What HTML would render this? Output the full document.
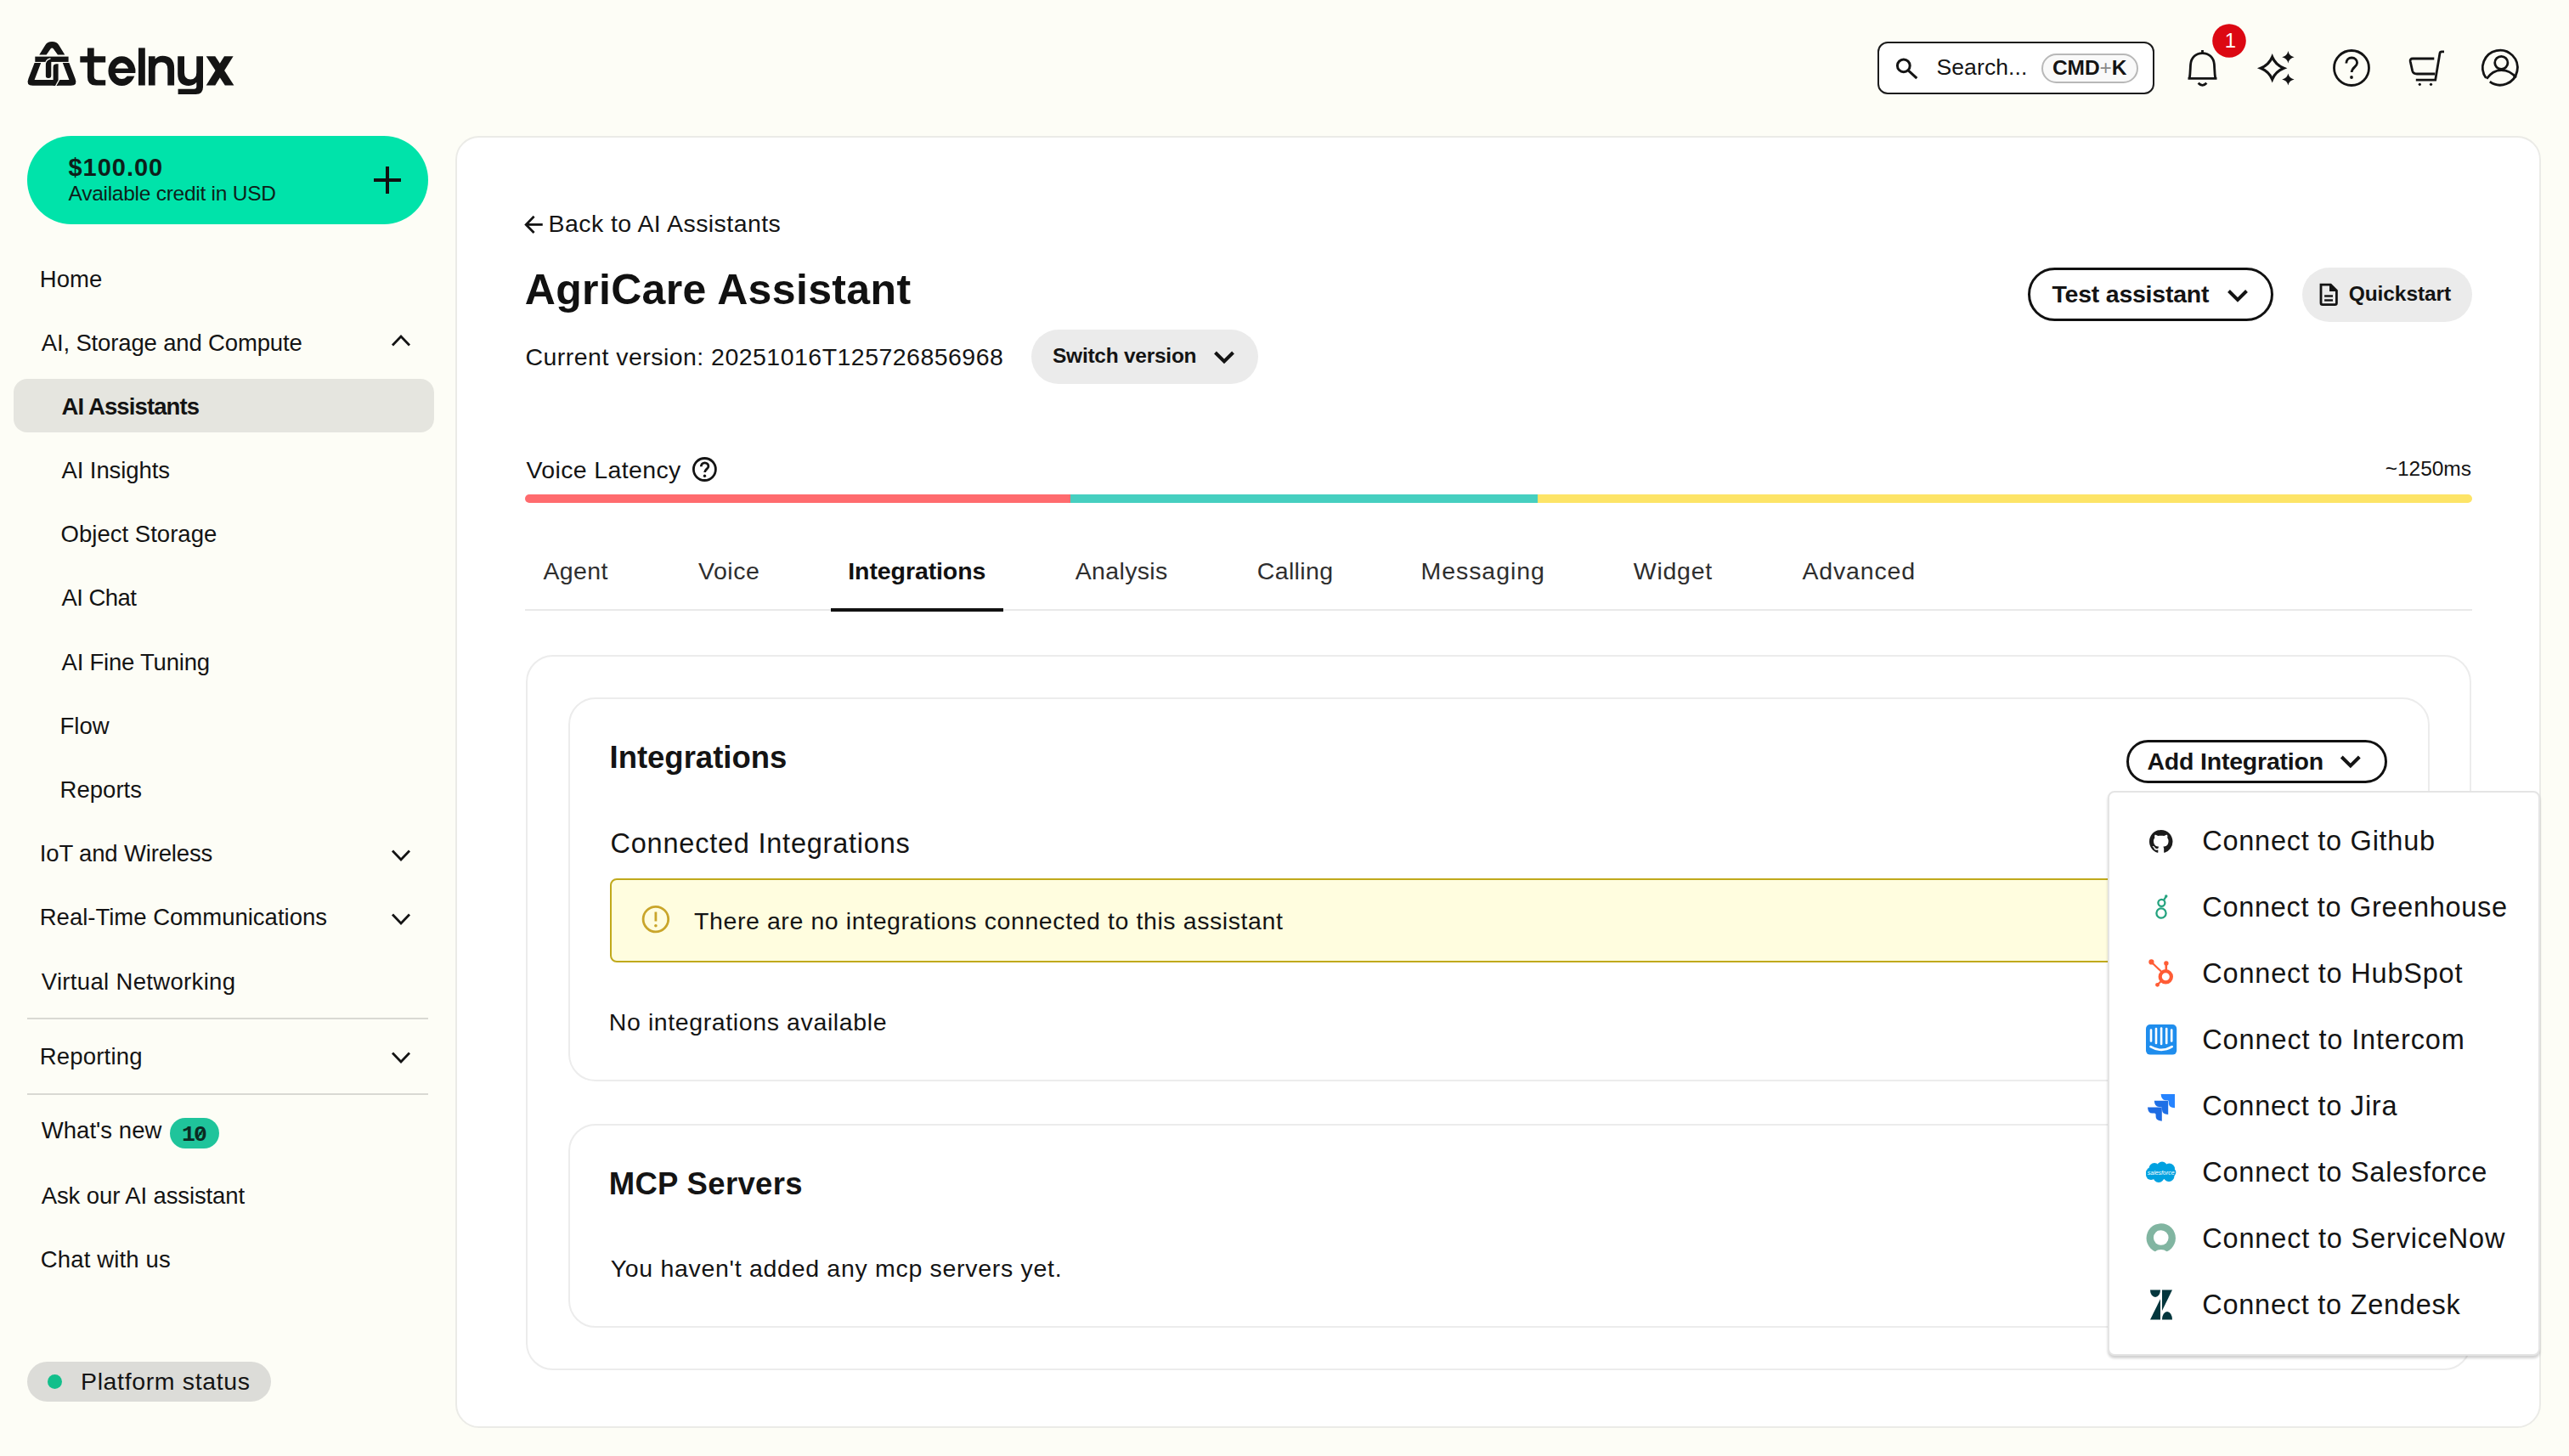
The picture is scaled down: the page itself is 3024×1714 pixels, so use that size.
<!DOCTYPE html>
<html><head><meta charset="utf-8"><style>
html,body{margin:0;padding:0;}
body{width:3024px;height:1714px;overflow:hidden;background:#fdfdf6;position:relative;font-family:"Liberation Sans", sans-serif;}
.t{position:absolute;white-space:pre;}
.a{position:absolute;box-sizing:border-box;}
svg{position:absolute;overflow:visible;}
@media (max-width:2000px){html{zoom:0.5;}}
</style></head><body>
<!-- main card -->
<div class="a" style="left:536px;top:160px;width:2455px;height:1521px;background:#fff;border:2px solid #ebebe7;border-radius:28px"></div>
<!-- logo icon -->
<svg style="left:32px;top:49px" width="58" height="52" viewBox="0 0 58 52">
 <g fill="#141414">
  <path d="M14.25,15.5 L21.2,4.2 C23,1.2 25.5,0 29.3,0 C33.1,0 35.6,1.2 37.4,4.2 L44.3,15.5 L36,15.5 L30.9,8.4 Q29.2,6.6 27.5,8.4 L22.6,15.5 Z"/>
  <rect x="9.3" y="17.6" width="39.3" height="6.3"/>
  <path d="M8.6,25 L16.2,25 L8.6,45.1 L36,45.1 L36,51.7 L6.5,51.7 Q-1.8,51.7 1.5,43.5 Z"/>
  <path d="M41.8,25 L49.4,25 L56.5,43.5 Q59.8,51.7 51.5,51.7 L33,51.7 L33,45.1 L49.4,45.1 Z"/>
  <path d="M21.7,23 L28.3,23 L28.3,39.7 Q28.3,43 25,43 Q21.7,43 21.7,39.7 Z"/>
  <path d="M30.5,30 Q30.5,26.2 34.3,26.2 L36.6,26.2 L36.6,51.7 L30.5,51.7 Z"/>
 </g>
 <g fill="none" stroke="#fdfdf6" stroke-width="1.3">
  <path d="M20.9,44 L20.9,29 Q20.9,21 27.5,19.8"/>
  <path d="M29.6,45 L29.6,30 Q29.6,25.3 34.3,25.3 L38,25.3"/>
  <path d="M33.6,52.2 L37.8,44.6"/>
 </g>
</svg>
<!-- telnyx wordmark -->
<svg style="left:0;top:0" width="1" height="1">
 <g fill="#141414">
  <path d="M102.9,56.4 H110.7 V66.2 H124.2 V73.5 H110.7 V89.5 Q110.7,94.2 115.4,94.2 H124.2 V100.5 H113 Q102.9,100.5 102.9,90.5 V73.5 H94.3 V66.2 H102.9 Z"/>
  <rect x="163" y="56.4" width="7.8" height="44.1"/>
  <path d="M174.9,100.5 V66.2 H182.6 V69.6 Q185.6,65.8 191.5,65.8 Q205.1,65.8 205.1,80.5 V100.5 H197.3 V81.5 Q197.3,73.3 190,73.3 Q182.6,73.3 182.6,81.5 V100.5 Z"/>
  <path d="M209.2,66.2 H217 V85.5 Q217,93.4 224.2,93.4 Q231.3,93.4 231.3,85.5 V66.2 H239 V102.5 Q239,111.1 230.4,111.1 H209.6 V104.7 H228.5 Q231.3,104.7 231.3,101.8 V96.8 Q228.2,100.9 222.3,100.9 Q209.2,100.9 209.2,87 Z"/>
  <path d="M242.7,66.2 H253.3 L275.4,100.5 H264.8 Z"/>
  <path d="M274.6,66.2 H264 L242.7,100.5 H253.3 Z"/>
 </g>
 <ellipse cx="143.35" cy="83.55" rx="12" ry="13.45" fill="none" stroke="#141414" stroke-width="7.8"/>
 <rect x="131" y="80.6" width="28.3" height="5.4" fill="#141414"/>
 <rect x="149" y="86" width="12.5" height="3.6" fill="#fdfdf6"/>
</svg>
<!-- credit pill -->
<div class="a" style="left:32px;top:160px;width:472px;height:104px;background:#00e3aa;border-radius:52px"></div>
<div class="a" style="left:440px;top:210.25px;width:32px;height:3.5px;background:#111"></div>
<div class="a" style="left:454.25px;top:196px;width:3.5px;height:32px;background:#111"></div>
<!-- sidebar highlight -->
<div class="a" style="left:16px;top:446px;width:495px;height:63px;background:#e5e5df;border-radius:16px"></div>
<svg style="left:0;top:0" width="1" height="1">
 <g fill="none" stroke="#141414" stroke-width="2.8">
  <polyline points="462,406.5 472,396 482,406.5"/>
  <polyline points="462,1001.5 472,1012 482,1001.5"/>
  <polyline points="462,1076.5 472,1087 482,1076.5"/>
  <polyline points="462,1239.5 472,1250 482,1239.5"/>
 </g>
</svg>
<div class="a" style="left:32px;top:1198px;width:472px;height:2px;background:#d9d9d3"></div>
<div class="a" style="left:32px;top:1287px;width:472px;height:2px;background:#d9d9d3"></div>
<div class="a" style="left:200px;top:1316px;width:57.5px;height:36px;background:#1fc49b;border-radius:18px"></div>
<svg style="left:0;top:0" width="1" height="1"><path d="M232.2,1339.5 L239.8,1328.5" stroke="#0b2a22" stroke-width="2"/></svg>
<div class="a" style="left:32px;top:1602.5px;width:287px;height:47px;background:#dcdcd8;border-radius:23.5px"></div>
<div class="a" style="left:55.5px;top:1618px;width:17px;height:17px;background:#12bf8b;border-radius:50%"></div>
<!-- search -->
<div class="a" style="left:2209.5px;top:48.75px;width:326px;height:62.5px;background:#fff;border:2px solid #1c1c1c;border-radius:12px"></div>
<div class="a" style="left:2402.5px;top:62.5px;width:114.5px;height:35px;background:#f9f9f9;border:2px solid #b8b8b8;border-radius:17.5px"></div>
<svg style="left:0;top:0" width="1" height="1">
 <g fill="none" stroke="#141414" stroke-width="3">
  <circle cx="2240.8" cy="77.3" r="7.4"/>
  <line x1="2246.2" y1="82.8" x2="2256.3" y2="92.2"/>
 </g>
 <!-- bell -->
 <g fill="none" stroke="#141414" stroke-width="2.8">
  <path d="M2575.5,92.3 H2609.5"/>
  <path d="M2577.3,92.3 C2578.3,86 2578.2,80 2578.6,75.5 C2579.4,67.5 2585,62.6 2592.5,62.6 C2600,62.6 2605.6,67.5 2606.4,75.5 C2606.8,80 2606.7,86 2607.7,92.3"/>
  <path d="M2592.5,59 V62.6"/>
  <path d="M2587.6,97.8 Q2592.5,103 2597.4,97.8"/>
 </g>
 <circle cx="2624" cy="48" r="19.8" fill="#dc0812"/>
 <!-- sparkle -->
 <path d="M2674.7,67.2 Q2678.6,76.4 2688.2,80.3 Q2678.6,84.2 2674.7,93.4 Q2670.8,84.2 2661.2,80.3 Q2670.8,76.4 2674.7,67.2 Z" fill="none" stroke="#141414" stroke-width="3.2" stroke-linejoin="miter"/>
 <path d="M2693.4,60 Q2694.6,66 2700.6,67.2 Q2694.6,68.4 2693.4,74.4 Q2692.2,68.4 2686.2,67.2 Q2692.2,66 2693.4,60 Z" fill="#141414"/>
 <path d="M2693.4,86.6 Q2694.6,92.4 2700.6,93.6 Q2694.6,94.8 2693.4,100.6 Q2692.2,94.8 2686.2,93.6 Q2692.2,92.4 2693.4,86.6 Z" fill="#141414"/>
 <!-- help -->
 <g fill="none" stroke="#141414" stroke-width="2.8">
  <circle cx="2768" cy="80" r="20.5"/>
  <path d="M2761.8,74.6 C2761.8,70.6 2764.6,68 2768.2,68 C2771.9,68 2774.6,70.7 2774.6,74.1 C2774.6,78.4 2768.2,79.6 2768.2,85"/>
 </g>
 <circle cx="2768" cy="91" r="1.9" fill="#141414"/>
 <!-- cart -->
 <g fill="none" stroke="#141414" stroke-width="2.8">
  <path d="M2877,60.8 H2874 Q2872.3,60.8 2872,62.5 L2866.7,94.2 H2843.8"/>
  <path d="M2865.3,69 H2840 Q2836.6,69 2837.2,72.2 L2839.7,83.5 Q2840.6,87 2845,87 H2866.3"/>
 </g>
 <circle cx="2848.3" cy="99.3" r="1.6" fill="#141414"/>
 <circle cx="2861.5" cy="99.3" r="1.6" fill="#141414"/>
 <!-- user -->
 <g fill="none" stroke="#141414" stroke-width="2.8">
  <path d="M2930.8,96.2 A20.5,20.5 0 1 0 2926.3,91.7"/>
  <circle cx="2944.3" cy="73.9" r="7.6"/>
  <path d="M2927,92.8 Q2934,82.6 2944.3,82.6 Q2955,82.6 2961.6,91.6"/>
 </g>
 <!-- back arrow -->
 <g fill="none" stroke="#141414" stroke-width="2.8">
  <path d="M619.5,264.4 H638.75"/>
  <path d="M628.6,254.8 L619.2,264.4 L628.6,274"/>
 </g>
</svg>
<!-- switch version -->
<div class="a" style="left:1214px;top:388px;width:267px;height:64px;background:#ebebeb;border-radius:32px"></div>
<!-- test assistant -->
<div class="a" style="left:2387px;top:315px;width:289px;height:63px;background:#fff;border:3px solid #111;border-radius:32px"></div>
<div class="a" style="left:2709.5px;top:315px;width:200px;height:63.75px;background:#ebebeb;border-radius:32px"></div>
<svg style="left:0;top:0" width="1" height="1">
 <g fill="none" stroke="#141414" stroke-width="4">
  <polyline points="1430.5,415 1441,425.5 1451.5,415"/>
  <polyline points="2623.5,342.5 2634,353 2644.5,342.5"/>
  <polyline points="2756.3,891 2766.8,901.5 2777.3,891"/>
 </g>
 <!-- doc -->
 <path d="M2732,335.2 H2743.4 L2750.4,342.2 V356.8 Q2750.4,358.6 2748.6,358.6 H2733.8 Q2732,358.6 2732,356.8 Z" fill="none" stroke="#141414" stroke-width="2.8"/>
 <path d="M2742,334.5 L2751,343 H2742 Z" fill="#141414"/>
 <rect x="2736.1" y="347.3" width="9.9" height="2.4" fill="#141414"/>
 <rect x="2736.1" y="352.3" width="9.9" height="2.4" fill="#141414"/>
 <!-- latency help -->
 <g fill="none" stroke="#141414" stroke-width="2.8">
  <circle cx="829.4" cy="552.5" r="13"/>
  <path d="M825.3,549.3 C825.3,546.6 827.2,544.8 829.6,544.8 C832.1,544.8 833.9,546.6 833.9,548.9 C833.9,551.8 829.6,552.5 829.6,556"/>
 </g>
 <circle cx="829.5" cy="560.2" r="1.7" fill="#141414"/>
</svg>
<!-- latency bar -->
<div class="a" style="left:618px;top:582px;width:642px;height:10px;background:#ff6b6e;border-radius:5px 0 0 5px"></div>
<div class="a" style="left:1260px;top:582px;width:550px;height:10px;background:#46cfc0"></div>
<div class="a" style="left:1810px;top:582px;width:1100px;height:10px;background:#fde467;border-radius:0 5px 5px 0"></div>
<!-- tabs -->
<div class="a" style="left:618px;top:717px;width:2292px;height:2px;background:#e9e9e9"></div>
<div class="a" style="left:978px;top:715.5px;width:203px;height:4px;background:#111"></div>
<!-- cards -->
<div class="a" style="left:618.75px;top:770.5px;width:2290px;height:842px;border:2px solid #ececec;border-radius:32px"></div>
<div class="a" style="left:668.75px;top:820.5px;width:2191px;height:452px;border:2px solid #ececec;border-radius:32px"></div>
<div class="a" style="left:668.75px;top:1322.5px;width:2191px;height:240px;border:2px solid #ececec;border-radius:32px"></div>
<div class="a" style="left:2503px;top:870.5px;width:306.5px;height:51.25px;border:3px solid #111;border-radius:26px"></div>
<!-- alert -->
<div class="a" style="left:718.25px;top:1034.25px;width:2091px;height:99px;background:#fffddf;border:2px solid #c0a91c;border-radius:8px"></div>
<svg style="left:0;top:0" width="1" height="1">
 <g fill="none" stroke="#c9a52a" stroke-width="2.8">
  <circle cx="771.9" cy="1082.1" r="14.8"/>
  <path d="M771.9,1073.5 V1084.5"/>
 </g>
 <circle cx="771.9" cy="1089.8" r="1.8" fill="#c9a52a"/>
</svg>
<!-- dropdown -->
<div class="a" style="left:2480.75px;top:931.25px;width:509.25px;height:665px;background:#fff;border:2px solid #e4e4e4;border-radius:8px;box-shadow:0 3px 3px rgba(0,0,0,0.18)"></div>
<svg style="left:2530.4px;top:976.6px" width="27.5" height="27.5" viewBox="0 0 16 16"><path fill="#1b1b1b" d="M8 0C3.58 0 0 3.58 0 8c0 3.54 2.29 6.53 5.47 7.59.4.07.55-.17.55-.38 0-.19-.01-.82-.01-1.49-2.01.37-2.53-.49-2.69-.94-.09-.23-.48-.94-.82-1.130-.28-.15-.68-.52-.01-.53.63-.01 1.08.58 1.23.82.72 1.21 1.87.87 2.33.66.07-.52.28-.87.51-1.07-1.780-.2-3.64-.89-3.64-3.95 0-.87.31-1.59.82-2.15-.08-.2-.36-1.02.08-2.12 0 0 .67-.21 2.2.82.64-.18 1.32-.27 2-.27.68 0 1.36.09 2 .27 1.53-1.04 2.2-.82 2.2-.82.44 1.1.16 1.92.08 2.12.51.56.82 1.27.82 2.15 0 3.07-1.87 3.75-3.65 3.95.29.25.54.73.54 1.48 0 1.07-.01 1.93-.01 2.2 0 .21.15.46.55.38A8.013 8.013 0 0016 8c0-4.42-3.58-8-8-8z"/></svg>
<svg style="left:0;top:0" width="1" height="1">
 <!-- greenhouse -->
 <g fill="none" stroke="#24a37f" stroke-width="2.3">
  <circle cx="2544.4" cy="1062.8" r="4"/>
  <circle cx="2544" cy="1075" r="5.6"/>
  <path d="M2547.2,1059.4 L2549.6,1055.5"/>
 </g>
 <circle cx="2549.8" cy="1055" r="1.7" fill="#24a37f"/>
 <!-- hubspot -->
 <g fill="none" stroke="#ff5c35">
  <circle cx="2549.3" cy="1149.8" r="6.6" stroke-width="4.2"/>
  <path d="M2532.6,1132.8 L2545,1144.5" stroke-width="2.2"/>
  <path d="M2549.8,1134 V1143" stroke-width="2.6"/>
  <path d="M2539.8,1159 L2545,1154" stroke-width="2.2"/>
 </g>
 <circle cx="2532.4" cy="1132.4" r="3.1" fill="#ff5c35"/>
 <circle cx="2549.9" cy="1134" r="2.7" fill="#ff5c35"/>
 <circle cx="2539.5" cy="1159.3" r="2.4" fill="#ff5c35"/>
 <!-- intercom -->
 <rect x="2526" y="1206" width="36.2" height="35.6" rx="5" fill="#1f8ded"/>
 <g stroke="#fff" stroke-width="2.6" stroke-linecap="round" fill="none">
  <path d="M2532,1212.5 V1225.5"/><path d="M2538,1211 V1228"/><path d="M2544.1,1210.5 V1229"/><path d="M2550.2,1211 V1228"/><path d="M2556.2,1212.5 V1225.5"/>
  <path d="M2531.5,1232.2 Q2544.1,1239.5 2556.7,1232.2"/>
 </g>
 <!-- jira -->
<path fill="#2684ff" d="M2543.6,1288 H2560 V1304.2 Q2552.8,1303.7 2552.8,1298.7 V1296.7 Q2552.8,1295.2 2551.3,1295.2 H2549.1 Q2544.1,1295.2 2543.6,1288 Z"/>
<path fill="#1d6fe6" d="M2535.8,1295.8 H2552.2 V1311.9 Q2545.0,1311.4 2545.0,1306.4 V1304.5 Q2545.0,1303.0 2543.5,1303.0 H2541.3 Q2536.3,1303.0 2535.8,1295.8 Z"/>
<path fill="#1e6ce3" d="M2528,1303.4 H2544.8 V1319.7 Q2537.6,1319.2 2537.6,1314.2 V1312.1 Q2537.6,1310.6 2536.1,1310.6 H2533.5 Q2528.5,1310.6 2528,1303.4 Z"/>
<!-- salesforce -->
 <g fill="#00a1e0">
  <ellipse cx="2543.7" cy="1380" rx="17.7" ry="8.5"/>
  <circle cx="2536" cy="1375.5" r="6.5"/><circle cx="2545" cy="1373.5" r="6"/><circle cx="2553.5" cy="1376" r="6.5"/>
  <circle cx="2532" cy="1383" r="6"/><circle cx="2541" cy="1385.5" r="6.5"/><circle cx="2553" cy="1384.5" r="6.5"/>
 </g>
 <text x="2543.7" y="1382.5" font-size="7" fill="#fff" text-anchor="middle" font-family="Liberation Sans" font-style="italic">salesforce</text>
 <!-- servicenow -->
 <circle cx="2543.75" cy="1457.5" r="17.2" fill="#81b5a1"/>
 <circle cx="2543.75" cy="1457" r="8.8" fill="#fff"/>
 <ellipse cx="2543.75" cy="1478.5" rx="9.5" ry="7.5" fill="#fff"/>
 <!-- zendesk -->
 <g fill="#03363d">
  <path d="M2531,1518.5 H2543 A6,8.5 0 0 1 2531,1518.5 Z"/>
  <path d="M2545,1518.5 H2557 L2545,1543 Z"/>
  <path d="M2543,1529.3 V1553.5 H2531 Z"/>
  <path d="M2545,1553.5 A6,9.5 0 0 1 2557,1553.5 Z"/>
 </g>
</svg>

<div class="t" style="left:80.50px;top:183.45px;font-size:29px;line-height:29px;font-weight:700;color:#0d1f1a;letter-spacing:0.967px;font-family:'Liberation Sans', sans-serif;">$100.00</div>
<div class="t" style="left:80.50px;top:216.26px;font-size:24.5px;line-height:24.5px;font-weight:400;color:#0d1f1a;letter-spacing:-0.258px;font-family:'Liberation Sans', sans-serif;">Available credit in USD</div>
<div class="t" style="left:46.75px;top:314.72px;font-size:27.5px;line-height:27.5px;font-weight:400;color:#141414;letter-spacing:0.063px;font-family:'Liberation Sans', sans-serif;">Home</div>
<div class="t" style="left:48.75px;top:390.47px;font-size:27.5px;line-height:27.5px;font-weight:400;color:#141414;letter-spacing:-0.149px;font-family:'Liberation Sans', sans-serif;">AI, Storage and Compute</div>
<div class="t" style="left:72.50px;top:464.72px;font-size:27.5px;line-height:27.5px;font-weight:700;color:#141414;letter-spacing:-0.890px;font-family:'Liberation Sans', sans-serif;">AI Assistants</div>
<div class="t" style="left:72.50px;top:539.97px;font-size:27.5px;line-height:27.5px;font-weight:400;color:#141414;letter-spacing:-0.090px;font-family:'Liberation Sans', sans-serif;">AI Insights</div>
<div class="t" style="left:71.50px;top:615.47px;font-size:27.5px;line-height:27.5px;font-weight:400;color:#141414;letter-spacing:0.028px;font-family:'Liberation Sans', sans-serif;">Object Storage</div>
<div class="t" style="left:72.50px;top:690.22px;font-size:27.5px;line-height:27.5px;font-weight:400;color:#141414;letter-spacing:-0.554px;font-family:'Liberation Sans', sans-serif;">AI Chat</div>
<div class="t" style="left:72.50px;top:765.72px;font-size:27.5px;line-height:27.5px;font-weight:400;color:#141414;letter-spacing:-0.214px;font-family:'Liberation Sans', sans-serif;">AI Fine Tuning</div>
<div class="t" style="left:70.50px;top:840.72px;font-size:27.5px;line-height:27.5px;font-weight:400;color:#141414;letter-spacing:0.016px;font-family:'Liberation Sans', sans-serif;">Flow</div>
<div class="t" style="left:70.50px;top:915.72px;font-size:27.5px;line-height:27.5px;font-weight:400;color:#141414;letter-spacing:0.035px;font-family:'Liberation Sans', sans-serif;">Reports</div>
<div class="t" style="left:46.75px;top:990.72px;font-size:27.5px;line-height:27.5px;font-weight:400;color:#141414;letter-spacing:-0.154px;font-family:'Liberation Sans', sans-serif;">IoT and Wireless</div>
<div class="t" style="left:46.75px;top:1065.97px;font-size:27.5px;line-height:27.5px;font-weight:400;color:#141414;letter-spacing:0.000px;font-family:'Liberation Sans', sans-serif;">Real-Time Communications</div>
<div class="t" style="left:48.75px;top:1142.22px;font-size:27.5px;line-height:27.5px;font-weight:400;color:#141414;letter-spacing:0.332px;font-family:'Liberation Sans', sans-serif;">Virtual Networking</div>
<div class="t" style="left:46.75px;top:1229.72px;font-size:27.5px;line-height:27.5px;font-weight:400;color:#141414;letter-spacing:0.194px;font-family:'Liberation Sans', sans-serif;">Reporting</div>
<div class="t" style="left:48.75px;top:1317.22px;font-size:27.5px;line-height:27.5px;font-weight:400;color:#141414;letter-spacing:0.037px;font-family:'Liberation Sans', sans-serif;">What's new</div>
<div class="t" style="left:48.75px;top:1394.22px;font-size:27.5px;line-height:27.5px;font-weight:400;color:#141414;letter-spacing:-0.112px;font-family:'Liberation Sans', sans-serif;">Ask our AI assistant</div>
<div class="t" style="left:47.75px;top:1469.22px;font-size:27.5px;line-height:27.5px;font-weight:400;color:#141414;letter-spacing:0.153px;font-family:'Liberation Sans', sans-serif;">Chat with us</div>
<div class="t" style="left:214.00px;top:1322.50px;font-size:26.5px;line-height:26.5px;font-weight:700;color:#0b2a22;letter-spacing:-1.903px;font-family:'Liberation Mono', monospace;">10</div>
<div class="t" style="left:95.00px;top:1612.12px;font-size:28.5px;line-height:28.5px;font-weight:400;color:#141414;letter-spacing:0.638px;font-family:'Liberation Sans', sans-serif;">Platform status</div>
<div class="t" style="left:2279.50px;top:66.31px;font-size:26.5px;line-height:26.5px;font-weight:400;color:#141414;letter-spacing:0.101px;font-family:'Liberation Sans', sans-serif;">Search...</div>
<div class="t" style="left:2416.00px;top:68.01px;font-size:24.5px;line-height:24.5px;font-weight:700;color:#141414;letter-spacing:-0.088px;font-family:'Liberation Sans', sans-serif;">CMD<span style="font-weight:400;color:#8a8a8a">+</span>K</div>
<div class="t" style="left:2618.70px;top:35.68px;font-size:24px;line-height:24px;font-weight:400;color:#ffffff;letter-spacing:0.000px;font-family:'Liberation Sans', sans-serif;">1</div>
<div class="t" style="left:645.50px;top:248.87px;font-size:28.5px;line-height:28.5px;font-weight:400;color:#141414;letter-spacing:0.441px;font-family:'Liberation Sans', sans-serif;">Back to AI Assistants</div>
<div class="t" style="left:617.75px;top:316.42px;font-size:50px;line-height:50px;font-weight:700;color:#111111;letter-spacing:0.353px;font-family:'Liberation Sans', sans-serif;">AgriCare Assistant</div>
<div class="t" style="left:618.50px;top:405.87px;font-size:28.5px;line-height:28.5px;font-weight:400;color:#141414;letter-spacing:0.467px;font-family:'Liberation Sans', sans-serif;">Current version: 20251016T125726856968</div>
<div class="t" style="left:1239.00px;top:407.26px;font-size:24.5px;line-height:24.5px;font-weight:700;color:#141414;letter-spacing:-0.257px;font-family:'Liberation Sans', sans-serif;">Switch version</div>
<div class="t" style="left:2415.50px;top:331.87px;font-size:28.5px;line-height:28.5px;font-weight:700;color:#141414;letter-spacing:-0.229px;font-family:'Liberation Sans', sans-serif;">Test assistant</div>
<div class="t" style="left:2764.75px;top:334.26px;font-size:24.5px;line-height:24.5px;font-weight:700;color:#141414;letter-spacing:-0.086px;font-family:'Liberation Sans', sans-serif;">Quickstart</div>
<div class="t" style="left:619.50px;top:539.12px;font-size:28.5px;line-height:28.5px;font-weight:400;color:#141414;letter-spacing:0.358px;font-family:'Liberation Sans', sans-serif;">Voice Latency</div>
<div class="t" style="left:2807.70px;top:539.66px;font-size:24.5px;line-height:24.5px;font-weight:400;color:#141414;letter-spacing:-0.037px;font-family:'Liberation Sans', sans-serif;">~1250ms</div>
<div class="t" style="left:639.50px;top:658.37px;font-size:28.5px;line-height:28.5px;font-weight:400;color:#2e2e2e;letter-spacing:0.360px;font-family:'Liberation Sans', sans-serif;">Agent</div>
<div class="t" style="left:822.00px;top:658.37px;font-size:28.5px;line-height:28.5px;font-weight:400;color:#2e2e2e;letter-spacing:0.533px;font-family:'Liberation Sans', sans-serif;">Voice</div>
<div class="t" style="left:998.25px;top:658.37px;font-size:28.5px;line-height:28.5px;font-weight:700;color:#111111;letter-spacing:-0.090px;font-family:'Liberation Sans', sans-serif;">Integrations</div>
<div class="t" style="left:1265.75px;top:658.37px;font-size:28.5px;line-height:28.5px;font-weight:400;color:#2e2e2e;letter-spacing:0.339px;font-family:'Liberation Sans', sans-serif;">Analysis</div>
<div class="t" style="left:1479.75px;top:658.37px;font-size:28.5px;line-height:28.5px;font-weight:400;color:#2e2e2e;letter-spacing:0.370px;font-family:'Liberation Sans', sans-serif;">Calling</div>
<div class="t" style="left:1672.50px;top:658.37px;font-size:28.5px;line-height:28.5px;font-weight:400;color:#2e2e2e;letter-spacing:0.941px;font-family:'Liberation Sans', sans-serif;">Messaging</div>
<div class="t" style="left:1922.75px;top:658.37px;font-size:28.5px;line-height:28.5px;font-weight:400;color:#2e2e2e;letter-spacing:0.744px;font-family:'Liberation Sans', sans-serif;">Widget</div>
<div class="t" style="left:2121.50px;top:658.37px;font-size:28.5px;line-height:28.5px;font-weight:400;color:#2e2e2e;letter-spacing:0.834px;font-family:'Liberation Sans', sans-serif;">Advanced</div>
<div class="t" style="left:717.50px;top:873.60px;font-size:36.5px;line-height:36.5px;font-weight:700;color:#141414;letter-spacing:-0.007px;font-family:'Liberation Sans', sans-serif;">Integrations</div>
<div class="t" style="left:2527.50px;top:882.12px;font-size:28.5px;line-height:28.5px;font-weight:700;color:#141414;letter-spacing:-0.207px;font-family:'Liberation Sans', sans-serif;">Add Integration</div>
<div class="t" style="left:718.50px;top:977.48px;font-size:32.5px;line-height:32.5px;font-weight:400;color:#141414;letter-spacing:0.771px;font-family:'Liberation Sans', sans-serif;">Connected Integrations</div>
<div class="t" style="left:817.00px;top:1070.12px;font-size:28.5px;line-height:28.5px;font-weight:400;color:#141414;letter-spacing:0.590px;font-family:'Liberation Sans', sans-serif;">There are no integrations connected to this assistant</div>
<div class="t" style="left:716.70px;top:1189.37px;font-size:28.5px;line-height:28.5px;font-weight:400;color:#141414;letter-spacing:0.614px;font-family:'Liberation Sans', sans-serif;">No integrations available</div>
<div class="t" style="left:716.65px;top:1375.90px;font-size:36.5px;line-height:36.5px;font-weight:700;color:#141414;letter-spacing:0.340px;font-family:'Liberation Sans', sans-serif;">MCP Servers</div>
<div class="t" style="left:718.65px;top:1478.87px;font-size:28.5px;line-height:28.5px;font-weight:400;color:#141414;letter-spacing:0.700px;font-family:'Liberation Sans', sans-serif;">You haven't added any mcp servers yet.</div>
<div class="t" style="left:2592.25px;top:973.73px;font-size:32.5px;line-height:32.5px;font-weight:400;color:#141414;letter-spacing:0.741px;font-family:'Liberation Sans', sans-serif;">Connect to Github</div>
<div class="t" style="left:2592.25px;top:1051.73px;font-size:32.5px;line-height:32.5px;font-weight:400;color:#141414;letter-spacing:0.687px;font-family:'Liberation Sans', sans-serif;">Connect to Greenhouse</div>
<div class="t" style="left:2592.25px;top:1129.73px;font-size:32.5px;line-height:32.5px;font-weight:400;color:#141414;letter-spacing:0.799px;font-family:'Liberation Sans', sans-serif;">Connect to HubSpot</div>
<div class="t" style="left:2592.25px;top:1207.73px;font-size:32.5px;line-height:32.5px;font-weight:400;color:#141414;letter-spacing:0.885px;font-family:'Liberation Sans', sans-serif;">Connect to Intercom</div>
<div class="t" style="left:2592.25px;top:1285.73px;font-size:32.5px;line-height:32.5px;font-weight:400;color:#141414;letter-spacing:0.764px;font-family:'Liberation Sans', sans-serif;">Connect to Jira</div>
<div class="t" style="left:2592.25px;top:1363.73px;font-size:32.5px;line-height:32.5px;font-weight:400;color:#141414;letter-spacing:0.766px;font-family:'Liberation Sans', sans-serif;">Connect to Salesforce</div>
<div class="t" style="left:2592.25px;top:1441.73px;font-size:32.5px;line-height:32.5px;font-weight:400;color:#141414;letter-spacing:0.831px;font-family:'Liberation Sans', sans-serif;">Connect to ServiceNow</div>
<div class="t" style="left:2592.25px;top:1519.73px;font-size:32.5px;line-height:32.5px;font-weight:400;color:#141414;letter-spacing:0.740px;font-family:'Liberation Sans', sans-serif;">Connect to Zendesk</div>
</body></html>
